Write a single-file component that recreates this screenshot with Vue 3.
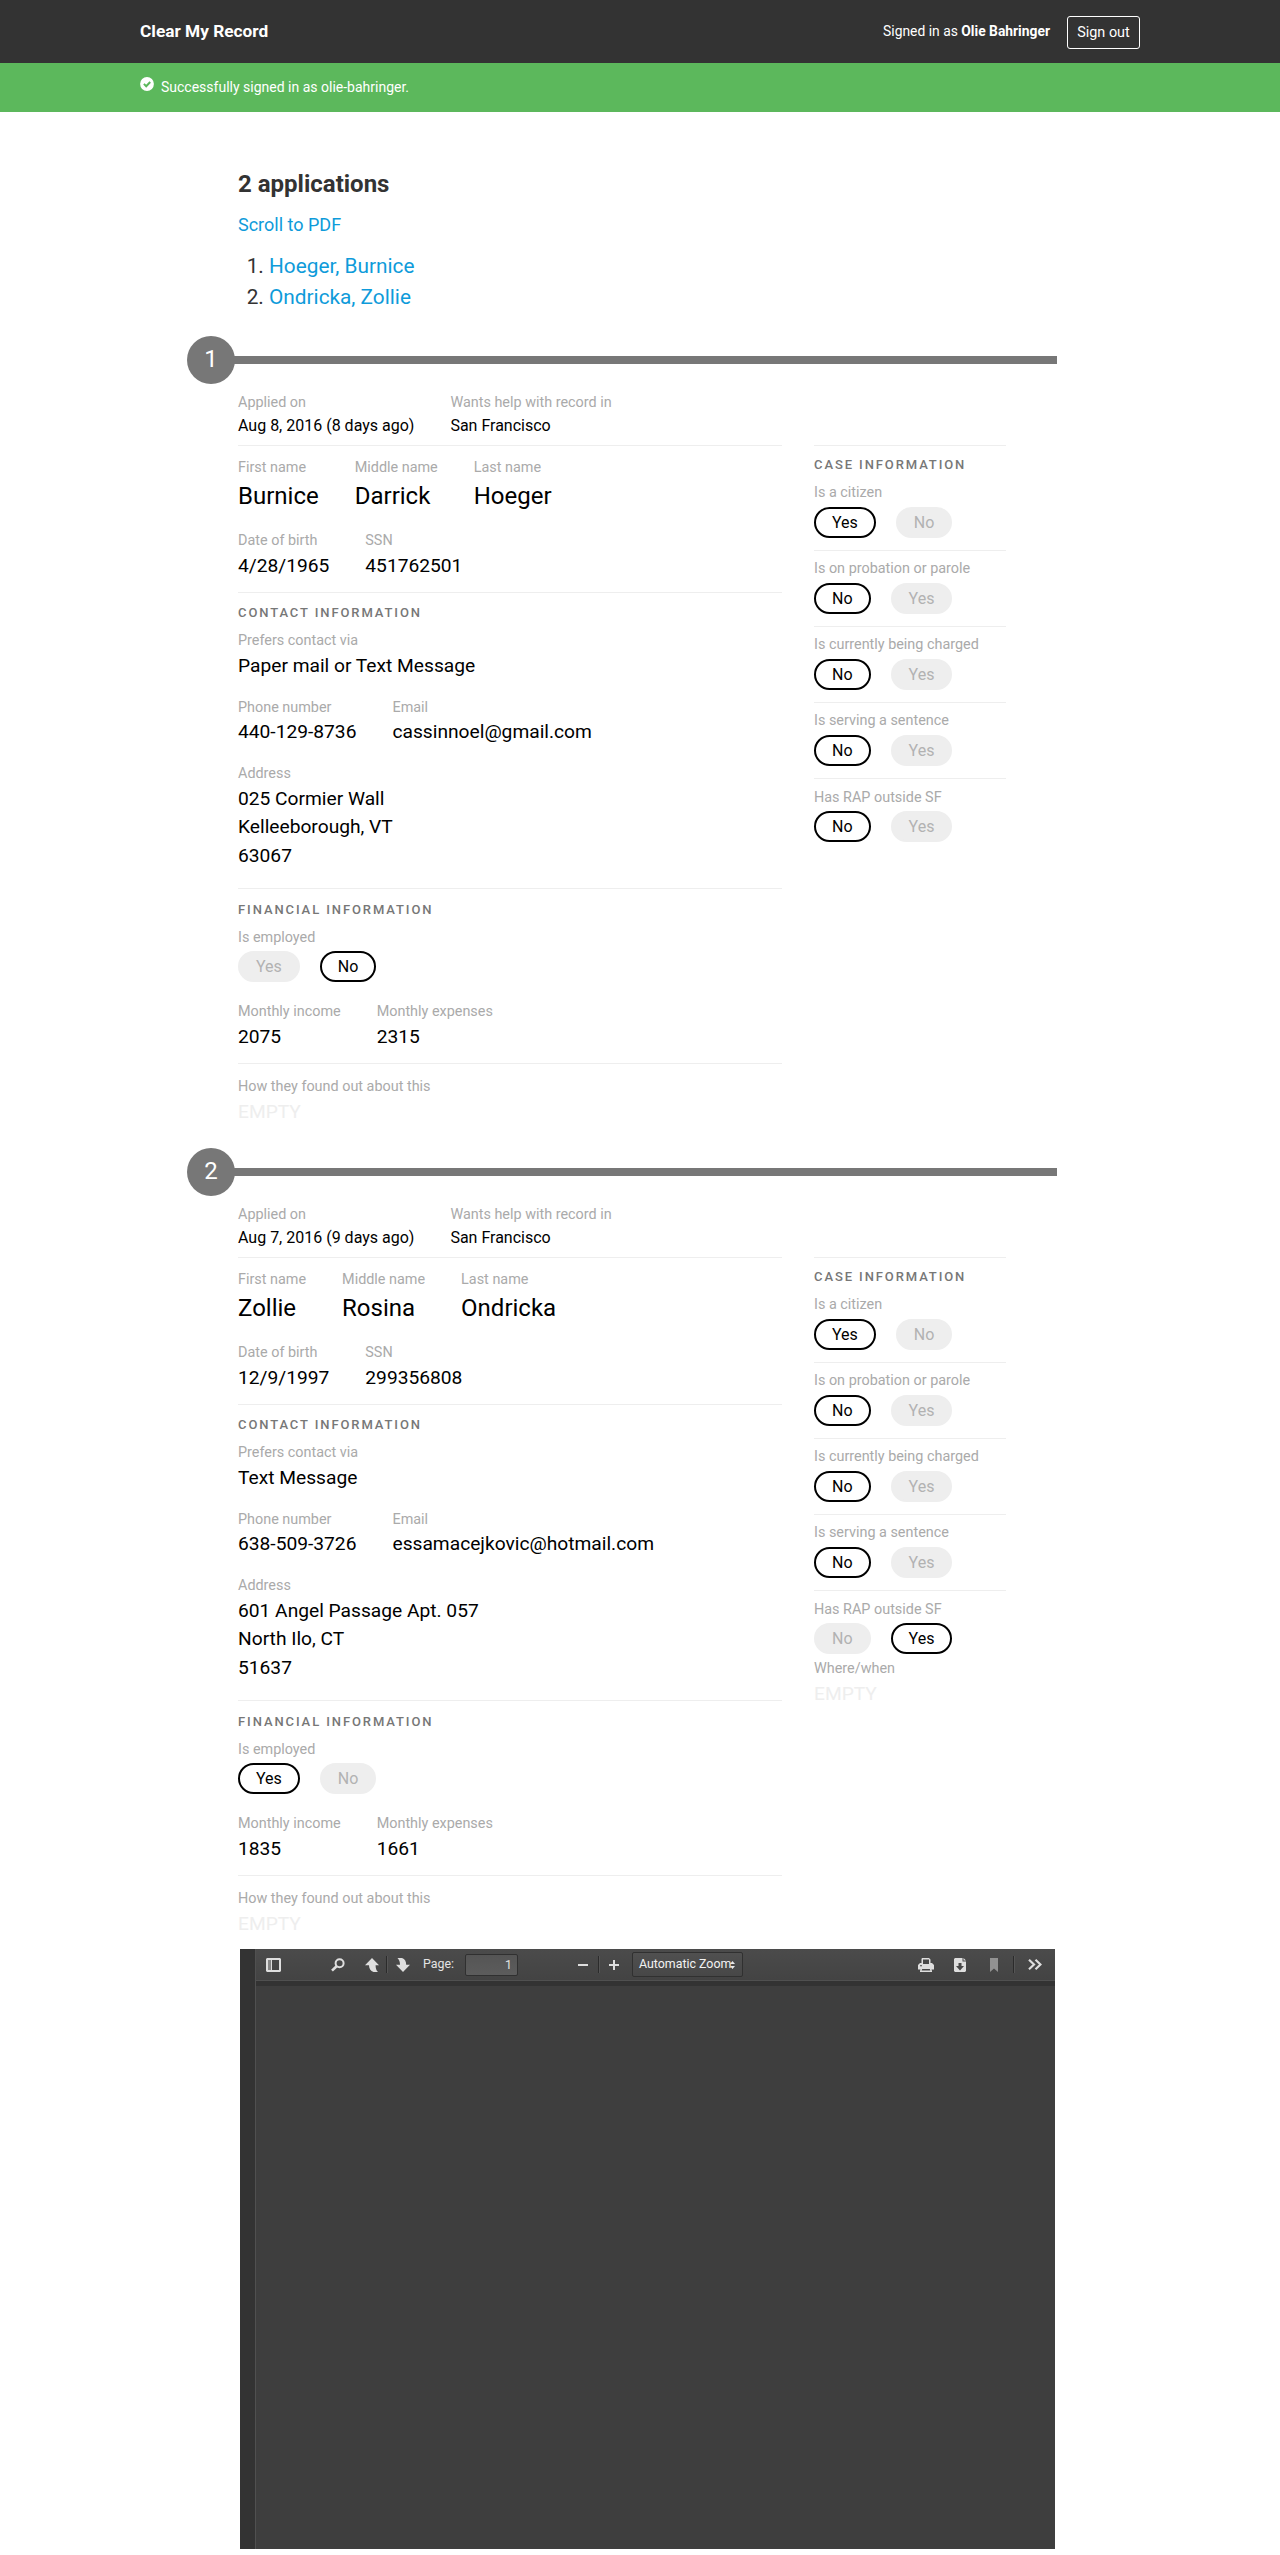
<script setup>
const caseRow = (label, options, picked, extra) => ({ label, options, picked, extra })

const applications = [
  {
    applied: 'Aug 8, 2016 (8 days ago)',
    county: 'San Francisco',
    first: 'Burnice', middle: 'Darrick', last: 'Hoeger',
    dob: '4/28/1965', ssn: '451762501',
    contact: 'Paper mail or Text Message',
    phone: '440-129-8736', email: 'cassinnoel@gmail.com',
    address: ['025 Cormier Wall', 'Kelleeborough, VT', '63067'],
    employed: 'No', income: '2075', expenses: '2315',
    caseInfo: [
      caseRow('Is a citizen', ['Yes', 'No'], 'Yes'),
      caseRow('Is on probation or parole', ['No', 'Yes'], 'No'),
      caseRow('Is currently being charged', ['No', 'Yes'], 'No'),
      caseRow('Is serving a sentence', ['No', 'Yes'], 'No'),
      caseRow('Has RAP outside SF', ['No', 'Yes'], 'No'),
    ],
  },
  {
    applied: 'Aug 7, 2016 (9 days ago)',
    county: 'San Francisco',
    first: 'Zollie', middle: 'Rosina', last: 'Ondricka',
    dob: '12/9/1997', ssn: '299356808',
    contact: 'Text Message',
    phone: '638-509-3726', email: 'essamacejkovic@hotmail.com',
    address: ['601 Angel Passage Apt. 057', 'North Ilo, CT', '51637'],
    employed: 'Yes', income: '1835', expenses: '1661',
    caseInfo: [
      caseRow('Is a citizen', ['Yes', 'No'], 'Yes'),
      caseRow('Is on probation or parole', ['No', 'Yes'], 'No'),
      caseRow('Is currently being charged', ['No', 'Yes'], 'No'),
      caseRow('Is serving a sentence', ['No', 'Yes'], 'No'),
      caseRow('Has RAP outside SF', ['No', 'Yes'], 'Yes', 'Where/when'),
    ],
  },
]
</script>

<template>
  <div class="page">
    <header class="topbar">
      <div class="wrap">
        <span class="brand">Clear My Record</span>
        <div class="session">
          <span class="who">Signed in as <b>Olie Bahringer</b></span>
          <a class="signout">Sign out</a>
        </div>
      </div>
    </header>

    <div class="flash">
      <div class="wrap">
        <svg class="tick" width="14" height="14" viewBox="0 0 14 14">
          <circle cx="7" cy="7" r="6.9" fill="#fff" />
          <path d="M3.9 6.9l2.3 2.3 4-4.2" fill="none" stroke="#5cb85c" stroke-width="2" />
        </svg>
        <span>Successfully signed in as olie-bahringer.</span>
      </div>
    </div>

    <main class="content">
      <h1>2 applications</h1>
      <a class="link scroll">Scroll to PDF</a>
      <ol class="index">
        <li v-for="app in applications" :key="app.ssn">
          <a class="link">{{ app.last }}, {{ app.first }}</a>
        </li>
      </ol>

      <article v-for="(app, i) in applications" :key="app.ssn" class="application">
        <div class="divider">
          <span class="count">{{ i + 1 }}</span>
          <span class="bar"></span>
        </div>

        <div class="columns">
          <div class="main-col">
            <section class="meta row small">
              <div><label>Applied on</label><p>{{ app.applied }}</p></div>
              <div><label>Wants help with record in</label><p>{{ app.county }}</p></div>
            </section>

            <section class="identity">
              <div class="row large">
                <div><label>First name</label><p>{{ app.first }}</p></div>
                <div><label>Middle name</label><p>{{ app.middle }}</p></div>
                <div><label>Last name</label><p>{{ app.last }}</p></div>
              </div>
              <div class="row">
                <div><label>Date of birth</label><p>{{ app.dob }}</p></div>
                <div><label>SSN</label><p>{{ app.ssn }}</p></div>
              </div>
            </section>

            <section class="contact">
              <h2>Contact Information</h2>
              <div class="row">
                <div><label>Prefers contact via</label><p>{{ app.contact }}</p></div>
              </div>
              <div class="row">
                <div><label>Phone number</label><p>{{ app.phone }}</p></div>
                <div><label>Email</label><p>{{ app.email }}</p></div>
              </div>
              <div class="row">
                <div><label>Address</label><p v-for="line in app.address" :key="line">{{ line }}</p></div>
              </div>
            </section>

            <section class="finance">
              <h2>Financial Information</h2>
              <label>Is employed</label>
              <div class="pills">
                <span v-for="o in ['Yes', 'No']" :key="o" class="pill" :class="{ on: o === app.employed }">{{ o }}</span>
              </div>
              <div class="row">
                <div><label>Monthly income</label><p>{{ app.income }}</p></div>
                <div><label>Monthly expenses</label><p>{{ app.expenses }}</p></div>
              </div>
            </section>

            <section class="source">
              <label>How they found out about this</label>
              <p class="empty">EMPTY</p>
            </section>
          </div>

          <aside class="side-col">
            <h2>Case Information</h2>
            <div v-for="c in app.caseInfo" :key="c.label" class="case">
              <label>{{ c.label }}</label>
              <div class="pills">
                <span v-for="o in c.options" :key="o" class="pill" :class="{ on: o === c.picked }">{{ o }}</span>
              </div>
              <div v-if="c.extra" class="extra">
                <label>{{ c.extra }}</label>
                <p class="empty">EMPTY</p>
              </div>
            </div>
          </aside>
        </div>
      </article>

      <div class="pdf">
        <div class="pdf-side"></div>
        <div class="pdf-body">
          <div class="toolbar">
            <svg class="ic sidebar" width="15" height="14" viewBox="0 0 15 14">
              <path fill-rule="evenodd" fill="#dedede" d="M1 0h13l1 1v12l-1 1H1l-1-1V1zM2 2v10h3V2zM6 2v10h7V2z" />
              <path d="M2 2h3v10H2z" fill="#858585" />
            </svg>
            <svg class="ic search" width="14" height="14" viewBox="0 0 14 14" fill="none" stroke="#dedede">
              <circle cx="8.6" cy="5.2" r="4" stroke-width="2" />
              <path d="M5.6 8.2L1 12.6" stroke-width="2.6" />
            </svg>
            <svg class="ic up" width="14" height="14" viewBox="0 0 14 14">
              <path fill="#dedede" d="M7 0l7 7.2h-3.4c0 3 .6 5 2.4 6.8H8.5C5.500 13 4 10.500 4 7.200H0z" />
            </svg>
            <i class="sep"></i>
            <svg class="ic down" width="14" height="14" viewBox="0 0 14 14">
              <path fill="#dedede" d="M7 14L0 6.800h4C4 4 3.300 1.800 1.500 0H6c3 1 4.200 3.500 4.200 6.800H14z" />
            </svg>
            <span class="page-label">Page:</span>
            <span class="page-input">1</span>
            <svg class="ic minus" width="10" height="10" viewBox="0 0 10 10"><path d="M0 4h10v2H0z" fill="#dedede" /></svg>
            <i class="sep"></i>
            <svg class="ic plus" width="10" height="10" viewBox="0 0 10 10"><path d="M4 0h2v4h4v2H6v4H4V6H0V4h4z" fill="#dedede" /></svg>
            <span class="zoom-select">
              <span>Automatic Zoom</span>
              <svg width="5" height="8" viewBox="0 0 5 8"><path d="M2.500 0L5 3H0zM2.500 8L0 5h5z" fill="#e8e8e8" /></svg>
            </span>
            <span class="grow"></span>
            <svg class="ic print" width="16" height="14" viewBox="0 0 16 14">
              <path fill-rule="evenodd" fill="#dedede" d="M4 0h7l1.500 1.500V5H14l2 2v4.500h-2.500L14 13v1H2v-1l.5-1.500H0V7l2-2h1.500V1zM5 1.500V6h6V1.500zM2 7.300v1h2v-1zM4.200 11L3.600 12.600h8.800l-.6-1.600z" />
            </svg>
            <svg class="ic save" width="12" height="14" viewBox="0 0 12 14">
              <path fill-rule="evenodd" fill="#dedede" d="M0 1l1-1h7.500v3.500H12V13l-1 1H1l-1-1zM4.500 5v3H2l4 4.500L10 8H7.500V5z" />
              <path d="M9.500 0L12 2.600H9.500z" fill="#dedede" />
            </svg>
            <svg class="ic mark" width="8" height="14" viewBox="0 0 8 14"><path d="M0 0h8v14L4 10.500 0 14z" fill="#929292" /></svg>
            <i class="sep"></i>
            <svg class="ic more" width="14" height="11" viewBox="0 0 14 11" fill="none" stroke="#dedede" stroke-width="2.200">
              <path d="M1 .8l5 4.700-5 4.700M7.500.8l5 4.700-5 4.700" />
            </svg>
          </div>
          <div class="loading"></div>
          <div class="viewer"></div>
        </div>
      </div>
    </main>
  </div>
</template>

<style>
body { background: #fff; }
</style>

<style scoped>
* { box-sizing: border-box; }
.page { font-family: Roboto, "Liberation Sans", sans-serif; color: #333; height: 2555px; line-height: 1.5; }
.wrap { width: 1000px; margin: 0 auto; display: flex; align-items: center; height: 100%; }
.topbar { background: #333; height: 63px; color: #fff; }
.topbar .wrap { justify-content: space-between; }
.brand { font-size: 17.300px; font-weight: 700; }
.session { display: flex; align-items: center; font-size: 13.850px; }
.who { margin-right: 17px; }
.signout { border: 1px solid #fff; border-radius: 3px; width: 73px; height: 33px; margin-top: 2px; text-align: center; font-size: 14.4px; line-height: 31px; }
.flash { background: #5cb85c; height: 49px; color: #fff; font-size: 14px; }
.tick { margin: -4px 7px 0 0; }

.content { width: 819px; margin-left: 238px; padding-top: 54px; }
h1, h2, p, ol { margin: 0; }
h1 { font-size: 24px; line-height: 36px; font-weight: 700; }
.link { color: #0e9bda; }
.scroll { display: block; font-size: 18px; line-height: 27px; margin-top: 9px; }
.index { font-size: 20.8px; line-height: 31.2px; padding-left: 31px; margin-top: 13px; }

.application { height: 812px; }
.index + .application { margin-top: 22.600px; }
.divider { display: flex; align-items: center; margin-left: -51px; height: 48px; }
.count { width: 48px; height: 48px; border-radius: 50%; background: #777; color: #fff; font-size: 24px; line-height: 47px; text-align: center; }
.bar { flex: 1; height: 8px; margin-left: -1px; background: #777; }
.columns { display: flex; gap: 32px; padding-top: 8px; }
.main-col { width: 544px; }
.side-col { width: 192px; margin-top: 53px; border-top: 1px solid #eee; padding-top: 9px; }
label { display: block; font-size: 14.4px; line-height: 21.6px; color: #aaa; }
p { font-size: 19.2px; line-height: 28.8px; color: #000; }
.small p { font-size: 16px; line-height: 24px; }
.large p { font-size: 24px; line-height: 36px; }
.row { display: flex; gap: 36px; }
.row + .row { margin-top: 16px; }
h2 { font-size: 13px; line-height: 19.2px; font-weight: 500; letter-spacing: 1.900px; color: #777; text-transform: uppercase; white-space: nowrap; margin-bottom: 8px; }
.main-col section { border-bottom: 1px solid #eee; }
.meta { height: 54px; }
.identity { height: 147px; padding-top: 10.800px; }
.contact { height: 296px; padding-top: 10px; }
.finance { height: 175px; padding-top: 10.500px; }
.finance .row { margin-top: 19px; }
.main-col .source { padding-top: 12px; border-bottom: 0; }
.pills { display: flex; gap: 20px; padding-top: 3px; }
.pill { height: 31px; line-height: 27px; border: 2px solid #eee; border-radius: 16px; padding: 0 16px; font-size: 16px; background: #eee; color: #b2b2b2; }
.pill.on { background: #fff; border-color: #000; color: #000; }
.case { padding-bottom: 12px; }
.case + .case { border-top: 1px solid #eee; padding-top: 7.500px; }
.extra { padding-top: 4px; }
.empty { color: #eee; }

.tick { position: relative; top: -2px; }
.pdf { width: 815px; height: 600px; margin: -11px 0 0 2px; display: flex; background: #333; }
.pdf-side { width: 15px; }
.pdf-body { flex: 1; border-left: 1px solid #505050; display: flex; flex-direction: column; }
.toolbar { height: 32px; display: flex; align-items: center; padding: 0 13px 0 10px; background: linear-gradient(#4b4b4b, #434343); border-bottom: 1px solid #505050; color: #e3e3e3; font-size: 12.400px; }
.ic { flex: none; }
.search { margin-left: 50px; }
.up { margin-left: 20px; }
.sep { width: 2px; height: 17px; background: #2b2b2b; border-right: 1px solid #555; flex: none; }
.up + .sep { margin-left: 7px; }
.down { margin-left: 8px; }
.page-label { margin: -2px 0 0 13px; width: 32px; line-height: 18px; white-space: nowrap; }
.page-input { margin-left: 10px; width: 53px; height: 22px; border: 1px solid #303030; border-radius: 2px; background: linear-gradient(#555, #5c5c5c); text-align: right; padding-right: 5px; line-height: 19px; }
.minus { margin-left: 60px; }
.minus + .sep { margin-left: 10px; }
.plus { margin-left: 9px; }
.zoom-select { margin-left: 13px; width: 111px; height: 25px; border: 1px solid #303030; border-radius: 2px; background: linear-gradient(#505050, #474747); padding-left: 6px; display: flex; align-items: center; white-space: nowrap; color: #f2f2f2; }
.zoom-select svg { margin-left: -1px; }
.grow { flex: 1; }
.save { margin-left: 20px; }
.mark { margin-left: 24px; }
.mark + .sep { margin-left: 15px; }
.more { margin-left: 13px; }
.loading { height: 5px; background: #333; }
.viewer { flex: 1; background: #3e3e3e; }
</style>
